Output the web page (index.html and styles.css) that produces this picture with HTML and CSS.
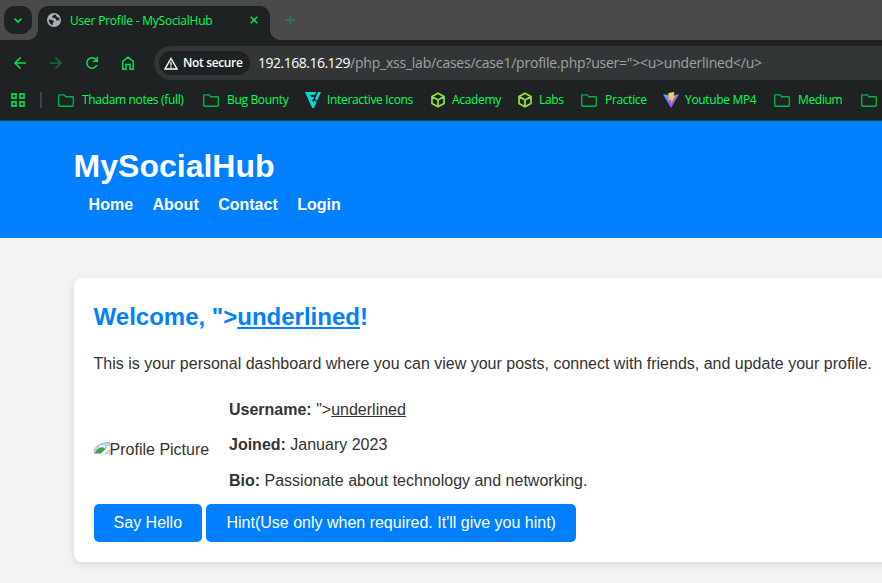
FILE: index.html
```html
<!DOCTYPE html>
<html lang="en">
<head>
<meta charset="utf-8">
<title>User Profile - MySocialHub</title>
<link rel="stylesheet" href="styles.css">
</head>
<body>
<svg class="defs" width="0" height="0" aria-hidden="true">
  <symbol id="folder" viewBox="0 0 16 13"><path d="M1.5.8h4.6l1.7 1.9h6.7a.8.8 0 0 1 .8.8v7.9a.8.8 0 0 1-.8.8h-13a.8.8 0 0 1-.8-.8V1.6a.8.8 0 0 1 .8-.8z" fill="none" stroke="#02b546" stroke-width="1.35"/></symbol>
  <symbol id="cube" viewBox="0 0 16 16"><path d="M8 1.2 14 4.6v6.8L8 14.8 2 11.4V4.6zM2.4 4.8 8 8l5.6-3.2M8 8v6.4" fill="none" stroke="#94e13b" stroke-width="1.7" stroke-linejoin="round"/></symbol>
</svg>
<div class="browser">
  <div class="tabstrip">
    <div class="tab-search"><svg width="10" height="7" viewBox="0 0 10 7"><path d="M1.5 1.5 5 5l3.500-3.500" fill="none" stroke="#00e854" stroke-width="1.6"/></svg></div>
    <div class="tab">
      <svg class="globe" width="14" height="14" viewBox="0 0 14 14"><circle cx="7" cy="7" r="7" fill="#aab0b7"/><path d="M8.300 1.500 5.500 2.800 5.200 4.500 8.600 5.600 9.300 7.500 12.500 7.200 12.200 4.500 10.200 4.300zM1.500 6.500 5.200 7 7.200 8.800 5.800 10 5.600 12.300 3 10.800z" fill="#1f2223"/></svg>
      <span class="tab-title">User Profile - MySocialHub</span>
      <svg class="close" width="8" height="8" viewBox="0 0 8 8"><path d="m.7.7 6.600 6.600m0-6.600L.7 7.300" stroke="#00e854" stroke-width="1.500"/></svg>
    </div>
    <svg class="plus" width="10" height="10" viewBox="0 0 10 10"><path d="M5 0v10M0 5h10" stroke="#24834b" stroke-width="1.400"/></svg>
  </div>
  <div class="toolbar">
    <svg width="14" height="14" viewBox="0 0 14 14"><path d="M13 7H2m5.500-5.500L2 7l5.500 5.500" fill="none" stroke="#00db4f" stroke-width="1.600"/></svg>
    <svg width="14" height="14" viewBox="0 0 14 14"><path d="M1 7h11M6.500 1.500 12 7l-5.500 5.500" fill="none" stroke="#146b37" stroke-width="1.600"/></svg>
    <svg width="14" height="14" viewBox="0 0 14 14"><path d="M11.800 9A5.200 5.200 0 1 1 11 3.700L12.200 5M12.300.8V5.200H7.900" fill="none" stroke="#00db4f" stroke-width="1.600"/></svg>
    <svg width="14" height="14" viewBox="0 0 14 14"><path d="M1.700 5.400 7 1.200l5.300 4.200v7.800H9V8.500H5v4.700H1.700z" fill="none" stroke="#00db4f" stroke-width="1.500"/></svg>
    <div class="omnibox">
      <div class="chip"><svg width="14" height="13" viewBox="0 0 14 13"><path d="M7 1.500 13 12H1z" fill="none" stroke="#fff" stroke-width="1.400"/><path d="M7 5v3.500M7 9.300v1.400" stroke="#fff" stroke-width="1.300"/></svg><span>Not secure</span></div>
      <div class="url"><span class="host">192.168.16.129</span><span class="path">/php_xss_lab/cases/case1/profile.php?user="&gt;&lt;u&gt;underlined&lt;/u&gt;</span></div>
    </div>
  </div>
  <div class="bookmarks">
    <svg class="apps" width="16" height="14" viewBox="0 0 16 14"><path d="M2 1h4v4h-4zM10 1h4v4h-4zM2 9h4v4h-4zM10 9h4v4h-4z" fill="none" stroke="#00cf4b" stroke-width="1.800"/></svg>
    <i class="divider"></i>
    <div class="bm"><svg width="16" height="13"><use href="#folder"/></svg><span>Thadam notes (full)</span></div>
    <div class="bm"><svg width="16" height="13"><use href="#folder"/></svg><span>Bug Bounty</span></div>
    <div class="bm brand"><svg width="16" height="16" viewBox="0 0 16 16"><path d="M0 0h11.500L9.700 3H5.200l1 2h3L7.800 7.700H7l1.400 3L10 8l1.600 2.500L9 16H7.200z" fill="#07d8d0"/><path d="M13 0h3l-4 9-2-2.500z" fill="#07d8d0"/></svg><span>Interactive Icons</span></div>
    <div class="bm brand"><svg width="16" height="16"><use href="#cube"/></svg><span>Academy</span></div>
    <div class="bm brand"><svg width="16" height="16"><use href="#cube"/></svg><span>Labs</span></div>
    <div class="bm"><svg width="16" height="13"><use href="#folder"/></svg><span>Practice</span></div>
    <div class="bm brand"><svg width="16" height="16" viewBox="0 0 16 16"><defs><linearGradient id="vg" x1="0" y1="0" x2=".6" y2="1"><stop stop-color="#3bb8ff"/><stop offset="1" stop-color="#bd34fe"/></linearGradient><linearGradient id="bolt" x1="0" y1="0" x2="0" y2="1"><stop stop-color="#ffdf60"/><stop offset="1" stop-color="#ffa31a"/></linearGradient></defs><path d="M0 2.300 8 3.500l8-1.200L8 16z" fill="url(#vg)"/><path d="m5.500 1 6-1L10.300 4.500l2-.4L8 12V7.500l-2.500.4z" fill="url(#bolt)"/></svg><span>Youtube MP4</span></div>
    <div class="bm"><svg width="16" height="13"><use href="#folder"/></svg><span>Medium</span></div>
    <div class="bm"><svg width="16" height="13"><use href="#folder"/></svg></div>
  </div>
</div>
<div class="page">
  <header>
    <h1>MySocialHub</h1>
    <nav><a>Home</a> <a>About</a> <a>Contact</a> <a>Login</a></nav>
  </header>
  <main class="card">
    <h2>Welcome, "&gt;<u>underlined</u>!</h2>
    <p class="intro">This is your personal dashboard where you can view your posts, connect with friends, and update your profile.</p>
    <div class="profile">
      <div class="picture"><svg width="16" height="12" viewBox="0 0 16 12"><path d="M0 11V8C2 3.500 8 .3 15.500 0v3L7 11.500H1z" fill="#bdd3f3"/><path d="M5 5.500c0-2 2-2.500 3.500-2 1.500-1 3 0 3 2z" fill="#eef5ff"/><path d="M1 11c1-3 4-5.500 7-5.500 2 0 3 .5 3.500 1.500L7 11z" fill="#3ea63c"/><path d="M8.500 11.500 15.500 4.500v3L11.500 11.500z" fill="#fff"/><path d="M0 8C2 3.500 8 .5 15.500.4v4M0 8v3.500h7.500M11.500 11.500h4V8z" stroke="#a4adb7" stroke-width=".8" fill="none"/></svg><span>Profile Picture</span></div>
      <div class="details">
        <p><strong>Username:</strong> "&gt;<u>underlined</u></p>
        <p><strong>Joined:</strong> January 2023</p>
        <p><strong>Bio:</strong> Passionate about technology and networking.</p>
      </div>
    </div>
    <div class="actions"><button>Say Hello</button><button>Hint(Use only when required. It'll give you hint)</button></div>
  </main>
</div>
</body>
</html>
```
FILE: styles.css
```css
* { box-sizing: border-box; }
html { height: 583px; overflow: hidden; }
body { margin: 0; width: 882px; height: 583px; overflow: hidden; background: #f3f3f3; font-family: "Liberation Sans", Arial, sans-serif; }
.defs { position: absolute; }
svg { display: block; flex: none; }

.browser { height: 121px; background: #1f2223; border-bottom: 1px solid #16502d; overflow: hidden; font-family: "Open Sans", "Noto Sans", sans-serif; font-size: 12px; color: #00ff55; white-space: nowrap; }
.tabstrip { height: 40px; background: #4a4a4a; display: flex; padding: 6px 0 0 4px; }
.tab-search { width: 28px; height: 28px; border-radius: 10px; background: #1f2223; display: flex; align-items: center; justify-content: center; }
.tab { position: relative; width: 232px; height: 34px; margin-left: 6px; padding: 0 12px 6px 9px; border-radius: 10px 10px 0 0; background: #1f2223; display: flex; align-items: center; }
.tab::before, .tab::after { content: ""; position: absolute; bottom: 0; width: 10px; height: 10px; }
.tab::before { left: -10px; background: radial-gradient(circle at 0 0, #4a4a4a 9.500px, #1f2223 10px); }
.tab::after { right: -10px; background: radial-gradient(circle at 100% 0, #4a4a4a 9.500px, #1f2223 10px); }
.tab-title { margin-left: 9px; width: 180px; letter-spacing: -0.22px; padding-top: 1px; }
.plus { margin: 9px 0 0 15px; }

.toolbar { height: 40px; display: flex; align-items: center; padding: 6px 0 0 13px; gap: 22px; }
.omnibox { display: flex; align-items: center; flex: 1; height: 34px; margin-left: -3px; padding-left: 5px; background: #323637; border-radius: 17px 0 0 17px; }
.chip { display: flex; align-items: center; width: 91px; height: 24px; padding-left: 5px; gap: 5px; border-radius: 12px; background: #1f2223; color: #fff; font-weight: 600; letter-spacing: -0.35px; }
.chip span { padding-bottom: 1px; }
.url { margin-left: 8px; padding-bottom: 1px; font-size: 14px; color: #a0a3a4; }
.host { color: #fff; letter-spacing: -0.5px; }
.path { letter-spacing: -0.23px; }

.bookmarks { height: 40px; display: grid; grid-template-columns: 30px 18px 145px 102px 125px 87px 64px 82px 111px 87px 21px; align-items: center; padding-left: 10px; }
.divider { width: 2px; height: 16px; background: #404345; }
.bm { display: flex; align-items: center; gap: 8px; letter-spacing: -0.33px; }
.bm span { padding-bottom: 1px; }
.brand { gap: 6px; }

.page { height: 462px; overflow: hidden; line-height: 1.6; font-size: 16px; color: #333; }
header { height: 116.8px; padding: 20px 0 0 73.600px; background: #007fff; color: #fff; }
h1 { margin: 0; font-size: 32px; }
nav { font-weight: bold; }
nav a { display: inline-block; margin-left: 15px; }
.card { margin: 40px 0 0 73.600px; width: 900px; height: 284px; padding: 20px; border-radius: 8px; background: #fff; box-shadow: 0 2px 8px rgba(0, 0, 0, .11); }
h2 { margin: 0 0 15px; font-size: 24px; color: #007fff; }
p { margin: 0; }
.profile { display: flex; align-items: center; margin-top: 20px; }
.picture { display: flex; align-items: center; width: 115.400px; margin-right: 20px; padding-top: 9px; white-space: nowrap; }
.picture svg { margin-top: -4px; }
.details { display: grid; gap: 10px; }
.actions { display: flex; gap: 4.400px; margin-top: 10px; }
button { height: 38px; padding: 0 20px; border: 0; border-radius: 5px; background: #007fff; color: #fff; font: 16px "Liberation Sans", Arial, sans-serif; }
```
